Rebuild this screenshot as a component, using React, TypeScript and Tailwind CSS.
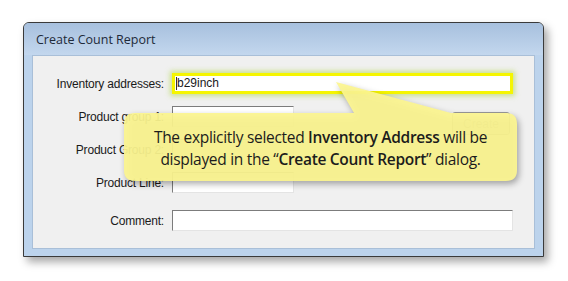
import React from "react";

const label = "text-right text-[12px] leading-none text-[#1a1a1a] tracking-[-0.2px]";
const sunken =
  "h-[21px] bg-white border border-t-[#7c7c7c] border-l-[#7c7c7c] border-b-[#e4e4e4] border-r-[#e4e4e4]";

function Row({ name, wide, children }: { name: string; wide?: boolean; children?: React.ReactNode }) {
  return (
    <div className="flex items-center gap-[8px]">
      <div className={`w-[131px] shrink-0 ${label}`}>{name}</div>
      {children ?? <div className={`${sunken} ${wide ? "w-[341px]" : "w-[122px]"}`} />}
    </div>
  );
}

function Callout() {
  return (
    <div className="absolute left-[91px] top-[26px] w-[400px] h-[106px]">
      <svg width="400" height="106" className="absolute inset-0 drop-shadow-[2px_3px_3px_rgba(0,0,0,0.35)]">
        <path
          d="M11 31 H230 L212 0 L327 31 H382 Q393 31 393 42 V88 Q393 99 382 99 H11 Q0 99 0 88 V42 Q0 31 11 31 Z"
          fill="#fcf58f"
          fillOpacity="0.93"
        />
      </svg>
      <div
        className="absolute left-0 top-[44px] w-[393px] text-center text-[15.5px] leading-[22px] text-[#1c1c1c] tracking-[-0.3px]"
        style={{ fontFamily: '"Open Sans", sans-serif' }}
      >
        <div>
          The explicitly selected <b className="font-semibold">Inventory Address</b> will be
        </div>
        <div>
          displayed in the “<b className="font-semibold">Create Count Report</b>” dialog.
        </div>
      </div>
    </div>
  );
}

export default function App() {
  return (
    <div className="w-[568px] h-[281px] bg-white pt-[22px] pl-[23px]" style={{ fontFamily: '"Liberation Sans", Arial, sans-serif' }}>
      <div className="w-[521px] h-[235px] flex flex-col border border-[#3a3a3a] rounded-t-[6px] bg-[#bcd3ec] shadow-[4px_5px_8px_rgba(0,0,0,0.35)]">
        <div
          className="h-[32px] shrink-0 flex items-center pl-[12px] pt-[2px] rounded-t-[5px] bg-gradient-to-b from-[#a7c0de] to-[#c3d7ee] text-[12.5px] text-[#1e2a3a]"
          style={{ fontFamily: '"Open Sans", sans-serif' }}
        >
          Create Count Report
        </div>
        <div className="relative flex-1 mx-[8px] mb-[7px] bg-[#f0f0f0] border border-[#a9bfd8] pt-[17px]">
          <div className="flex flex-col gap-[12px]">
            <Row name="Inventory addresses:">
              <div className="w-[341px] h-[21px] bg-white border-[3px] border-[#f5f500] shadow-[0_0_5px_2px_rgba(190,220,110,0.75)] flex items-center pl-[1px] text-[12px] text-[#1a1a1a]">
                <span className="border-l border-[#333] leading-[13px]">b29inch</span>
              </div>
            </Row>
            <Row name="Product group 1:" />
            <Row name="Product Group 2:" />
            <Row name="Product Line:" />
          </div>
          <div className="mt-[17px]">
            <Row name="Comment:" wide />
          </div>
          <div className="absolute left-[419px] top-[56px] w-[58px] h-[23px] border border-[#9a9a9a] rounded-[3px] bg-[#ececec] flex items-center justify-center text-[12px] text-[#9a9a9a]">
            Create
          </div>
          <Callout />
        </div>
      </div>
    </div>
  );
}
